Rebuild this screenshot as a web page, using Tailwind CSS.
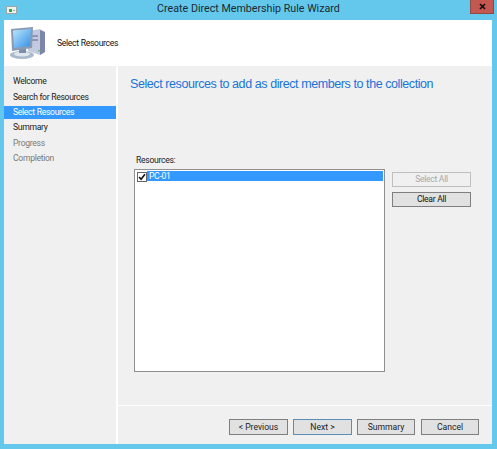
<!DOCTYPE html>
<html lang="en">
  <head>
    <meta charset="UTF-8" />
    <title>Create Direct Membership Rule Wizard</title>
    <script src="https://cdn.jsdelivr.net/npm/@tailwindcss/browser@4"></script>
  </head>
  <body class="w-[497px] h-[449px] overflow-hidden bg-[#63c8ec] font-['Roboto',sans-serif] text-[8.600px] tracking-[-0.3px] text-[#1a1a1a]">
    <div class="flex flex-col h-full">
      <!-- Title bar -->
      <div class="relative h-[20px] shrink-0 flex items-center justify-center text-[10.700px] tracking-normal text-[#1c2a33] pb-[2px]">
        <div class="absolute left-[6px] top-[6px] w-[11px] h-[8px] bg-[#eef2ee] border border-[#9aa8a8] flex items-center pl-[2px] gap-[1px]">
          <div class="w-[3px] h-[3px] bg-[#2fa84f]"></div>
          <div class="w-[2px] h-px bg-[#9aa8a8]"></div>
        </div>
        <span>Create Direct Membership Rule Wizard</span>
        <div class="absolute right-[3px] top-0 w-[24px] h-[14px] bg-[#c4574f] border border-[#8f4a44] border-t-0 flex items-center justify-center">
          <svg width="7" height="7" viewBox="0 0 7 7"><path d="M1 1l5 5M6 1l-5 5" stroke="#111" stroke-width="1.7" /></svg>
        </div>
      </div>

      <div class="flex flex-col ml-[4px] mr-[5px] h-[424px] bg-white">
        <!-- Header -->
        <div class="h-[46px] shrink-0 flex items-center bg-white">
          <svg class="ml-[5px]" width="37" height="36" viewBox="0 0 37 36">
            <defs>
              <linearGradient id="screen" x1="0" y1="0" x2="1" y2="1">
                <stop offset="0" stop-color="#bfe6fb" />
                <stop offset="1" stop-color="#2f8fe8" />
              </linearGradient>
            </defs>
            <ellipse cx="13" cy="30" rx="12" ry="4" fill="#a9b8cb" />
            <ellipse cx="13" cy="29" rx="8" ry="2.5" fill="#dfe6ee" />
            <path d="M10 22h7v6h-7z" fill="#7c90ab" />
            <path d="M19 6l12-2 5 3v20l-5 3-12-4z" fill="#c3c9de" />
            <path d="M31 5l5 2v20l-5 3z" fill="#7d86a8" />
            <path d="M23 10h6v2h-6zM23 14h6v2h-6z" fill="#8d96b4" />
            <rect x="29" y="25" width="2" height="1.5" fill="#5fc46a" />
            <path d="M2 4l22-2-1 21-20 3z" fill="#8b9ab3" />
            <path d="M4 5.500l18-1.500-1 17-16 2z" fill="url(#screen)" />
          </svg>
          <span class="ml-[11px] text-[#111]">Select Resources</span>
        </div>

        <div class="flex flex-1 min-h-0">
          <!-- Steps -->
          <div class="w-[112px] shrink-0 bg-[#f0f0f0] pt-[8px] flex flex-col">
            <div class="h-[15.500px] pl-[9px] flex items-center text-[#222]">Welcome</div>
            <div class="h-[15.500px] pl-[9px] flex items-center text-[#222]">Search for Resources</div>
            <div class="h-[13px] my-[1px] pl-[9px] flex items-center bg-[#3399ff] text-white">Select Resources</div>
            <div class="h-[15.500px] pl-[9px] flex items-center text-[#222]">Summary</div>
            <div class="h-[15.500px] pl-[9px] flex items-center text-[#7a7a7a]">Progress</div>
            <div class="h-[15.500px] pl-[9px] flex items-center text-[#7a7a7a]">Completion</div>
          </div>

          <!-- Main panel -->
          <div class="ml-[2px] flex-1 bg-[#f0f0f0] flex flex-col min-w-0">
            <div class="h-[339px] shrink-0 pl-[12px] pr-[21px]">
              <h1 class="pt-[10px] text-[12.500px] leading-[16px] font-['Liberation_Sans',sans-serif] tracking-[-0.42px] text-[#1a73d9]">Select resources to add as direct members to the collection</h1>
              <div class="mt-[63px] ml-[6px] leading-[11px] text-[#222]">Resources:</div>
              <div class="mt-[3px] ml-[4px] flex gap-[7px]">
                <div class="w-[251px] h-[203px] bg-white border border-[#8f8f8f] p-[1px] flex items-start">
                  <div class="w-[10px] h-[10px] ml-[1px] mt-[1px] shrink-0 bg-white border border-[#666] flex items-center justify-center">
                    <svg width="8" height="8" viewBox="0 0 9 9"><path d="M1.200 4.500l2.300 2.600 4.300-5.600" fill="none" stroke="#111" stroke-width="1.800" /></svg>
                  </div>
                  <div class="flex-1 h-[10px] bg-[#3399ff] text-white pl-[2px] leading-[10px]">PC-01</div>
                </div>
                <div class="w-[79px] pt-[3px] flex flex-col gap-[5px]">
                  <div class="h-[15px] border border-[#bfbfbf] bg-[#f0f0f0] text-[#a8a8a8] flex items-center justify-center">Select All</div>
                  <div class="h-[15px] border border-[#7f7f7f] bg-[#e1e1e1] text-[#111] flex items-center justify-center">Clear All</div>
                </div>
              </div>
            </div>

            <!-- Footer -->
            <div class="h-px shrink-0 bg-white"></div>
            <div class="flex-1 flex justify-end items-start pr-[13px] pt-[13px] tracking-normal text-[#222]">
              <div class="w-[59px] h-[16px] border border-[#7f7f7f] bg-[#e1e1e1] flex items-center justify-center">&lt; Previous</div>
              <div class="ml-[5px] w-[59px] h-[16px] border border-[#5b8db5] bg-[#e1e1e1] flex items-center justify-center">Next &gt;</div>
              <div class="ml-[5px] w-[58px] h-[16px] border border-[#7f7f7f] bg-[#e1e1e1] flex items-center justify-center">Summary</div>
              <div class="ml-[6px] w-[58px] h-[16px] border border-[#7f7f7f] bg-[#e1e1e1] flex items-center justify-center">Cancel</div>
            </div>
          </div>
        </div>
      </div>
    </div>
  </body>
</html>
